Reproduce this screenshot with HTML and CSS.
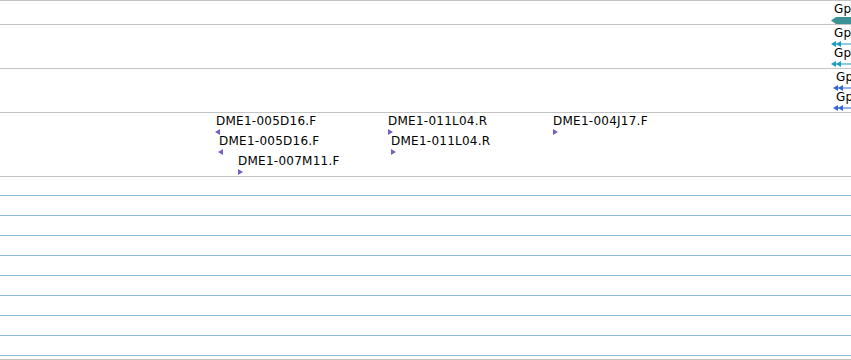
FILE: index.html
```html
<!DOCTYPE html>
<html lang="en">

<head>
    <meta charset="UTF-8">
    <meta name="viewport" content="width=device-width, initial-scale=1.0">
    <link rel="stylesheet" href="styles.css">
    <title>Genome tracks</title>
</head>

<body>
    <main class="tracks">
        <!-- gene track -->
        <section class="track trackGene">
            <div class="feature" style="left: 834px; top: 0px;">
                <span class="label">Gp</span>
                <svg class="glyph" width="20" height="7" viewBox="0 0 20 7">
                    <polygon points="0,3.5 5,0 20,0 20,7 5,7" fill="#3a9297"/>
                </svg>
            </div>
        </section>

        <!-- transcript track -->
        <section class="track trackTranscript">
            <div class="feature" style="left: 834px; top: 0px;">
                <span class="label">Gp</span>
                <svg class="glyph arrows" width="20" height="6" viewBox="0 0 20 6">
                    <polygon points="0,3 5,0 5,6" fill="#1a9cc2"/>
                    <polygon points="5,3 10,0 10,6" fill="#1a9cc2"/>
                    <rect x="5" y="2.5" width="15" height="1" fill="#1a9cc2"/>
                </svg>
            </div>
            <div class="feature" style="left: 834px; top: 20px;">
                <span class="label">Gp</span>
                <svg class="glyph arrows" width="20" height="6" viewBox="0 0 20 6">
                    <polygon points="0,3 5,0 5,6" fill="#1a9cc2"/>
                    <polygon points="5,3 10,0 10,6" fill="#1a9cc2"/>
                    <rect x="5" y="2.5" width="15" height="1" fill="#1a9cc2"/>
                </svg>
            </div>
        </section>

        <!-- mRNA track -->
        <section class="track trackMrna">
            <div class="feature" style="left: 836px; top: 0px;">
                <span class="label">Gp</span>
                <svg class="glyph arrows" width="20" height="6" viewBox="0 0 20 6">
                    <polygon points="0,3 5,0 5,6" fill="#3467d2"/>
                    <polygon points="5,3 10,0 10,6" fill="#3467d2"/>
                    <rect x="5" y="2.5" width="15" height="1" fill="#3467d2"/>
                </svg>
            </div>
            <div class="feature" style="left: 836px; top: 20px;">
                <span class="label">Gp</span>
                <svg class="glyph arrows" width="20" height="6" viewBox="0 0 20 6">
                    <polygon points="0,3 5,0 5,6" fill="#3467d2"/>
                    <polygon points="5,3 10,0 10,6" fill="#3467d2"/>
                    <rect x="5" y="2.5" width="15" height="1" fill="#3467d2"/>
                </svg>
            </div>
        </section>

        <!-- BAC ends track -->
        <section class="track trackEnds">
            <div class="feature" style="left: 216px; top: 0px;">
                <span class="label">DME1-005D16.F</span>
                <span class="marker markerLeft"></span>
            </div>
            <div class="feature" style="left: 219px; top: 20px;">
                <span class="label">DME1-005D16.F</span>
                <span class="marker markerLeft"></span>
            </div>
            <div class="feature" style="left: 238px; top: 40px;">
                <span class="label">DME1-007M11.F</span>
                <span class="marker markerRight"></span>
            </div>
            <div class="feature" style="left: 388px; top: 0px;">
                <span class="label">DME1-011L04.R</span>
                <span class="marker markerRight"></span>
            </div>
            <div class="feature" style="left: 391px; top: 20px;">
                <span class="label">DME1-011L04.R</span>
                <span class="marker markerRight"></span>
            </div>
            <div class="feature" style="left: 553px; top: 0px;">
                <span class="label">DME1-004J17.F</span>
                <span class="marker markerRight"></span>
            </div>
        </section>

        <!-- empty ruler rows -->
        <section class="ruler">
            <div class="rulerRow rulerFirst"></div>
            <div class="rulerRow"></div>
            <div class="rulerRow"></div>
            <div class="rulerRow"></div>
            <div class="rulerRow"></div>
            <div class="rulerRow"></div>
            <div class="rulerRow"></div>
            <div class="rulerRow"></div>
            <div class="rulerRow"></div>
            <div class="rulerEnd"></div>
        </section>
    </main>
</body>

</html>
```

FILE: styles.css
```css
body {
    margin: 0;
    padding: 0;
    background-color: #FFF;
    font-family: 'DejaVu Sans', sans-serif;
    font-size: 12px;
    color: #000;
    overflow: hidden;
}

.tracks {
    width: 851px;
}

/* Tracks */
.track {
    position: relative;
    border-top: 1px solid #c4c4c4;
}

.trackGene {
    height: 23px;
}

.trackTranscript,
.trackMrna {
    height: 43px;
}

.trackEnds {
    height: 63px;
}

.feature {
    position: absolute;
    display: flex;
    flex-direction: column;
    align-items: flex-start;
    white-space: nowrap;
}

.label {
    display: block;
    line-height: 14px;
    margin-top: 1px;
    letter-spacing: 0.25px;
}

.glyph {
    display: block;
    margin-left: -3px;
    margin-top: 1px;
}

.trackTranscript .glyph,
.trackMrna .glyph {
    margin-top: 1px;
}

/* Strand markers */
.marker {
    display: block;
    width: 0;
    height: 0;
    margin-top: 1px;
    border-top: 3px solid transparent;
    border-bottom: 3px solid transparent;
}

.markerLeft {
    margin-left: -1px;
    border-right: 5px solid #7a5ec2;
}

.markerRight {
    border-left: 5px solid #7a5ec2;
}

/* Ruler */
.ruler {
    border-top: 1px solid #c4c4c4;
}

.rulerRow {
    height: 19px;
    border-bottom: 1px solid #8fbbdd;
}

.rulerFirst {
    height: 18px;
}

.rulerEnd {
    height: 3px;
    border-bottom: 1px solid #c4c4c4;
}
```
